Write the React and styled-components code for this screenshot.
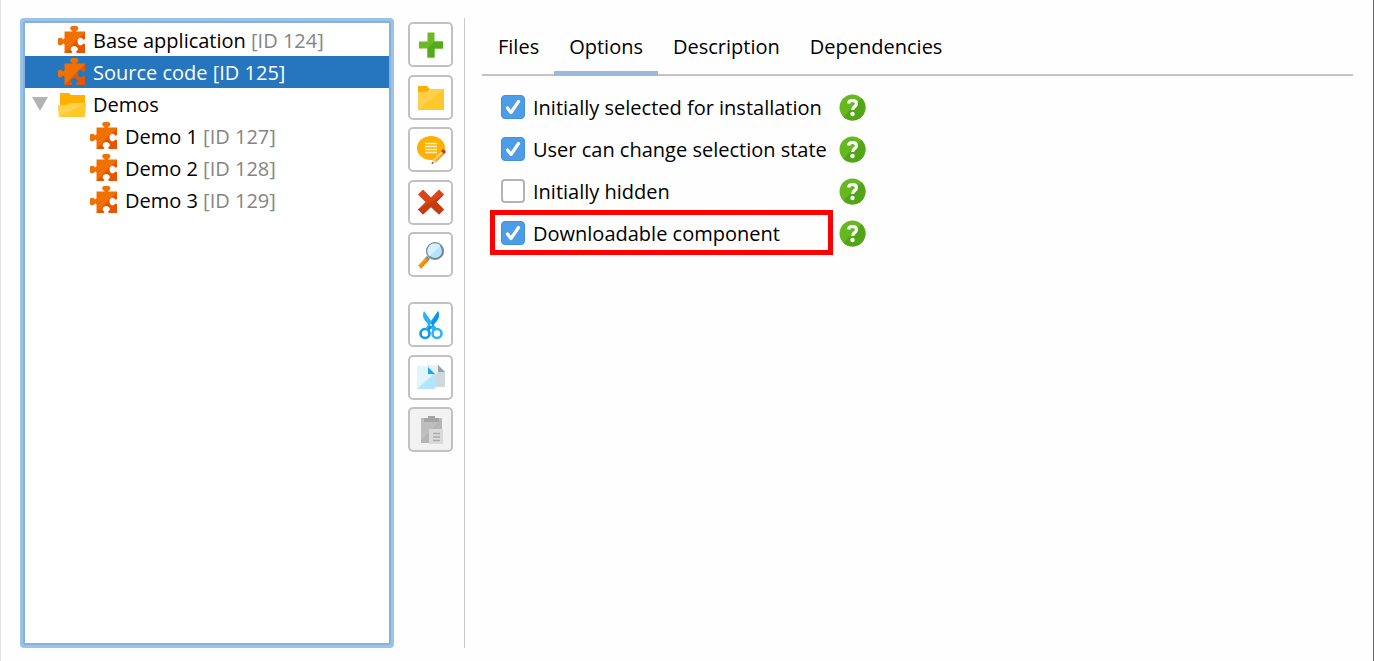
import React, { useState } from 'react';
import styled, { createGlobalStyle } from 'styled-components';

const GlobalStyle = createGlobalStyle`
  * {
    box-sizing: border-box;
  }

  body {
    margin: 0;
    background-color: #fefefe;
    color: #000;
    font-family: 'Open Sans', 'Noto Sans', sans-serif;
    font-size: 20px;
    line-height: 28px;
  }

  button,
  input {
    margin: 0;
    font: inherit;
    color: inherit;
  }
`;

const Window = styled.main`
  display: flex;
  min-height: 100vh;
  padding: 18px 20px 13px 19px;
  border-left: 1px solid #e3e3e3;
  border-right: 1px solid #666;
`;

const Tree = styled.ul`
  flex: 0 0 374px;
  margin: 0;
  padding: 3px 2px;
  list-style: none;
  border: 3px solid #98c3ea;
  border-radius: 4px;
  box-shadow: inset 0 0 0 2px #8bb0d5;
  background-color: #fff;
`;

const TreeRow = styled.li`
  display: flex;
  align-items: center;
  height: 32px;
  padding-left: ${({ $level }) => ($level ? 65 : 33)}px;
  background-color: ${({ $selected }) => ($selected ? '#2675bf' : 'transparent')};
  color: ${({ $selected }) => ($selected ? '#fff' : '#000')};
  white-space: pre;

  svg {
    flex: none;
    margin-right: 7px;
  }
`;

const ItemName = styled.span`
  padding-top: 2px;
`;

const ItemId = styled(ItemName)`
  color: ${({ $selected }) => ($selected ? '#fff' : '#858585')};
`;

const Expander = styled.button`
  width: 33px;
  height: 32px;
  margin-left: -33px;
  padding: 0 0 0 7px;
  border: 0;
  background: none;

  svg {
    display: block;
    margin: 0;
  }
`;

const Toolbar = styled.div`
  display: flex;
  flex-direction: column;
  gap: 25px;
  padding: 4px 11px 0 14px;
  border-right: 1px solid #c8c8c8;
`;

const ToolGroup = styled.div`
  display: flex;
  flex-direction: column;
  justify-content: space-between;
  height: ${({ $height }) => $height}px;
`;

const ToolButton = styled.button`
  display: flex;
  align-items: center;
  justify-content: center;
  width: 45px;
  height: 45px;
  padding: 0;
  border: 2px solid #c1c1c1;
  border-radius: 5px;
  background-color: #fff;

  &:disabled {
    background-color: #f2f2f2;
  }
`;

const Details = styled.section`
  flex: 1;
  min-width: 0;
  padding-left: 17px;
`;

const Tabs = styled.div`
  display: flex;
  height: 58px;
  padding-left: 1px;
  border-bottom: 2px solid #c4c4c4;
`;

const Tab = styled.button`
  height: 58px;
  padding: 4px 15px 0;
  border: 0;
  border-bottom: 5px solid ${({ $active }) => ($active ? '#99badd' : 'transparent')};
  background: none;
`;

const Options = styled.div`
  padding: 10px 0 0 8px;
`;

const OptionRow = styled.div`
  display: flex;
  align-items: center;
  gap: 6px;
  height: 42px;
`;

const OptionLabel = styled.label`
  position: relative;
  display: flex;
  align-items: center;
  gap: 8px;
  width: 343px;
  height: 42px;
  padding-left: 11px;
  white-space: nowrap;

  &::after {
    content: '';
    display: ${({ $highlighted }) => ($highlighted ? 'block' : 'none')};
    position: absolute;
    inset: -2px 0 -1px;
    border: 5px solid #fe0000;
    pointer-events: none;
  }
`;

const OptionText = styled.span`
  padding-top: 2px;
`;

const CheckBox = styled.span`
  display: grid;
  width: 24px;
  height: 24px;

  input,
  svg {
    grid-area: 1 / 1;
    width: 24px;
    height: 24px;
  }

  input {
    appearance: none;
    border: 2px solid #b4b4b4;
    border-radius: 4px;
    background-color: #fff;
  }

  input:checked {
    border: 1px solid #4191dd;
    background-color: #4c9ce7;
  }

  svg {
    pointer-events: none;
    visibility: hidden;
  }

  input:checked + svg {
    visibility: visible;
  }
`;

const HelpButton = styled.button`
  width: 27px;
  height: 27px;
  padding: 0;
  border: 0;
  background: none;

  svg {
    display: block;
  }
`;

const PUZZLE = 'M6.500 5.500h8v-.5a4 3 0 1 1 3.500 0v.5h9V13l-1.500.6a3.300 4 0 1 0 0 4l1.500.6V27h-8l-.8-1.500a3.800 3 0 1 0-4 0L13.500 27h-7v-8.500l-1.500-1a3.200 3.800 0 1 1 0-4l1.500-1z';

const PuzzleIcon = ({ id }) => (
  <svg width="28" height="28" viewBox="0 0 28 28" aria-hidden="true">
    <clipPath id={id}>
      <path d={PUZZLE} />
    </clipPath>
    <g clipPath={`url(#${id})`}>
      <path d="M0 0h28v28H0z" fill="#f07000" />
      <path d="M27 6v21H6z" fill="#e85500" />
    </g>
  </svg>
);

const OpenFolderIcon = () => (
  <svg width="28" height="28" viewBox="0 0 28 28" aria-hidden="true">
    <path d="M2 3h9l2 2h14v20H2z" fill="#ffb000" />
    <path d="M0 15h9l3-2h16l-1 14H1z" fill="#ffc82c" />
    <path d="M0 15h9l3-2h16L1 27z" fill="#ffd34e" />
  </svg>
);

const ArrowIcon = () => (
  <svg width="16" height="14" viewBox="0 0 16 14" aria-hidden="true">
    <path d="M0 0h16L8 14z" fill="#b3b3b3" />
  </svg>
);

const AddIcon = () => (
  <svg width="28" height="28" viewBox="0 0 28 28" aria-hidden="true">
    <path d="M10.500 1.500h7v9H26v7h-8.500v9h-7v-9H2v-7h8.500z" fill="#6abb22" />
    <path d="M17.500 10.500H26v7h-8.500v9h-7v-9z" fill="#55a91a" />
  </svg>
);

const FolderIcon = () => (
  <svg width="28" height="28" viewBox="0 0 28 28" aria-hidden="true">
    <path d="M1 3h9l3 3h14v5H1z" fill="#ffb000" />
    <path d="M1 9h9l3-3h14v21H1z" fill="#ffc82c" />
    <path d="M1 9h9l3-3h14L1 27z" fill="#ffd04a" />
  </svg>
);

const CommentIcon = () => (
  <svg width="30" height="30" viewBox="0 0 30 30" aria-hidden="true">
    <ellipse cx="15" cy="13" rx="14" ry="12" fill="#ffb000" />
    <path d="M9 8.500h12M9 11.500h12M9 14.500h12M9 17.500h12" stroke="#fff3ce" strokeWidth="1.500" />
    <path d="M15.500 29l2-5 8-8 3 3-8 8z" fill="#f6a52a" />
    <path d="M17.500 24l8-8 1.500 1.500-8 8z" fill="#ffd35a" />
    <path d="M15.500 29l2-5 3 3z" fill="#ead4a5" />
    <path d="M15.500 29l.8-2 1.300 1.200z" fill="#3b3b3b" />
    <path d="M25 16l1.500-1.500c1.200-1 3.900 1.700 3 3L28 19z" fill="#c8322b" />
  </svg>
);

const DeleteIcon = () => (
  <svg width="28" height="28" viewBox="0 0 28 28" aria-hidden="true">
    <path d="M1 6.500L6 1.500l8 8 8-8 5 5L19.500 14l7.500 7.500-5 5-8-7.500-8 7.500-5-5L8.500 14z" fill="#da4518" />
    <path d="M27 6.500L19.500 14l7.500 7.500-5 5-8-7.500-8 7.500-5-5z" fill="#c63b10" />
  </svg>
);

const SearchIcon = () => (
  <svg width="28" height="28" viewBox="0 0 28 28" aria-hidden="true">
    <path d="M10 15l3 3-2.500 2.500-3-3z" fill="#778a94" />
    <path d="M8.500 16.500l3 3L4 27.500 1 24.500z" fill="#ff9c0a" />
    <path d="M10 18l1.500 1.500L4 27.500 2.500 26z" fill="#f28500" />
    <circle cx="18" cy="10" r="8" fill="#b5e3fc" stroke="#718690" strokeWidth="2" />
    <path d="M12.500 15.500A7.500 7.500 0 0 1 23.500 4.500z" fill="#d5f0ff" />
  </svg>
);

const CutIcon = () => (
  <svg width="28" height="30" viewBox="0 0 28 30" aria-hidden="true">
    <circle cx="8" cy="23.500" r="4.500" fill="none" stroke="#0c98e8" strokeWidth="2.600" />
    <circle cx="20" cy="23.500" r="4.500" fill="none" stroke="#28b4f5" strokeWidth="2.600" />
    <path d="M7 1c-2 4-1 8 3 12l6 8 4-2z" fill="#28b4f5" />
    <path d="M21 1c2 4 1 8-3 12l-6 8-4-2z" fill="#28b4f5" />
    <path d="M21 1c2 4 1 8-3 12l-6 8-2-1z" fill="#0998e8" />
    <circle cx="14" cy="15" r="1.200" fill="#cdd6da" />
  </svg>
);

const CopyIcon = () => (
  <svg width="28" height="26" viewBox="0 0 28 26" aria-hidden="true">
    <path d="M10 1h11l7 7v15H10z" fill="#cfd8dc" />
    <path d="M10 1h11v7l-3 3z" fill="#eceff1" />
    <path d="M21 1l7 7h-7z" fill="#90a4ae" />
    <path d="M0 2h11l7 7v16H0z" fill="#b3e5fc" />
    <path d="M0 2h11l7 7L0 25z" fill="#e1f5fe" />
    <path d="M11 3l7 7h-7z" fill="#19a9ee" />
  </svg>
);

const PasteIcon = () => (
  <svg width="28" height="28" viewBox="0 0 28 28" aria-hidden="true">
    <path d="M4 2h21v25H4z" fill="#b5b5b5" />
    <path d="M4 2h21L4 25z" fill="#bebebe" />
    <path d="M7 2h4V0h7v2h4v4H7z" fill="#a4a4a4" />
    <path d="M12 13h14v15H12z" fill="#dadada" />
    <path d="M16 17.500h7M16 21h7M16 24.500h7" stroke="#aaa" strokeWidth="1.500" />
  </svg>
);

const HelpIcon = () => (
  <svg width="27" height="27" viewBox="0 0 27 27" aria-hidden="true">
    <circle cx="13.500" cy="13.500" r="13" fill="#65b81f" />
    <path d="M22.700 4.300A13 13 0 0 1 4.300 22.700z" fill="#52a517" />
    <path d="M9.500 9.500C9.700 7.500 11.300 6.500 13.500 6.500c2.400 0 4 1.200 4 3.200 0 3-3.900 2.900-3.900 6.300" fill="none" stroke="#fff" strokeWidth="3.200" />
    <circle cx="13.500" cy="20" r="2.200" fill="#fff" />
  </svg>
);

const CheckIcon = () => (
  <svg viewBox="0 0 24 24" aria-hidden="true">
    <path d="M6.500 13l3.500 4.500L17.500 6.500" fill="none" stroke="#fff" strokeWidth="3.200" strokeLinecap="round" strokeLinejoin="round" />
  </svg>
);

const items = [
  { name: 'Base application', id: 124, level: 0 },
  { name: 'Source code', id: 125, level: 0, selected: true },
  { name: 'Demos', folder: true, level: 0 },
  { name: 'Demo 1', id: 127, level: 1 },
  { name: 'Demo 2', id: 128, level: 1 },
  { name: 'Demo 3', id: 129, level: 1 },
];

const editTools = [
  { label: 'Add component', Icon: AddIcon },
  { label: 'Add folder', Icon: FolderIcon },
  { label: 'Edit comment', Icon: CommentIcon },
  { label: 'Delete', Icon: DeleteIcon },
  { label: 'Search', Icon: SearchIcon },
];

const clipboardTools = [
  { label: 'Cut', Icon: CutIcon },
  { label: 'Copy', Icon: CopyIcon },
  { label: 'Paste', Icon: PasteIcon, disabled: true },
];

const tabs = ['Files', 'Options', 'Description', 'Dependencies'];

const initialOptions = [
  { label: 'Initially selected for installation', checked: true },
  { label: 'User can change selection state', checked: true },
  { label: 'Initially hidden', checked: false },
  { label: 'Downloadable component', checked: true, highlighted: true },
];

const renderTool = ({ label, Icon, disabled }) => (
  <ToolButton key={label} type="button" aria-label={label} disabled={disabled}>
    <Icon />
  </ToolButton>
);

const App = () => {
  const [activeTab, setActiveTab] = useState('Options');
  const [options, setOptions] = useState(initialOptions);

  const toggle = label => {
    setOptions(options.map(option => (
      option.label === label ? { ...option, checked: !option.checked } : option
    )));
  };

  return (
    <>
      <GlobalStyle />
      <Window>
        <Tree>
          {items.map(({ name, id, level, folder, selected }) => (
            <TreeRow key={name} $level={level} $selected={selected}>
              {folder && (
                <Expander type="button" aria-label="Collapse">
                  <ArrowIcon />
                </Expander>
              )}
              {folder ? <OpenFolderIcon /> : <PuzzleIcon id={`puzzle-${id}`} />}
              <ItemName>{name}</ItemName>
              {id && <ItemId $selected={selected}>{` [ID ${id}]`}</ItemId>}
            </TreeRow>
          ))}
        </Tree>
        <Toolbar>
          <ToolGroup $height={255}>{editTools.map(renderTool)}</ToolGroup>
          <ToolGroup $height={150}>{clipboardTools.map(renderTool)}</ToolGroup>
        </Toolbar>
        <Details>
          <Tabs role="tablist">
            {tabs.map(tab => (
              <Tab
                key={tab}
                type="button"
                role="tab"
                aria-selected={tab === activeTab}
                $active={tab === activeTab}
                onClick={() => setActiveTab(tab)}
              >
                {tab}
              </Tab>
            ))}
          </Tabs>
          <Options>
            {options.map(({ label, checked, highlighted }) => (
              <OptionRow key={label}>
                <OptionLabel $highlighted={highlighted}>
                  <CheckBox>
                    <input type="checkbox" checked={checked} onChange={() => toggle(label)} />
                    <CheckIcon />
                  </CheckBox>
                  <OptionText>{label}</OptionText>
                </OptionLabel>
                <HelpButton type="button" aria-label={`Help: ${label}`}>
                  <HelpIcon />
                </HelpButton>
              </OptionRow>
            ))}
          </Options>
        </Details>
      </Window>
    </>
  );
};

export default App;
